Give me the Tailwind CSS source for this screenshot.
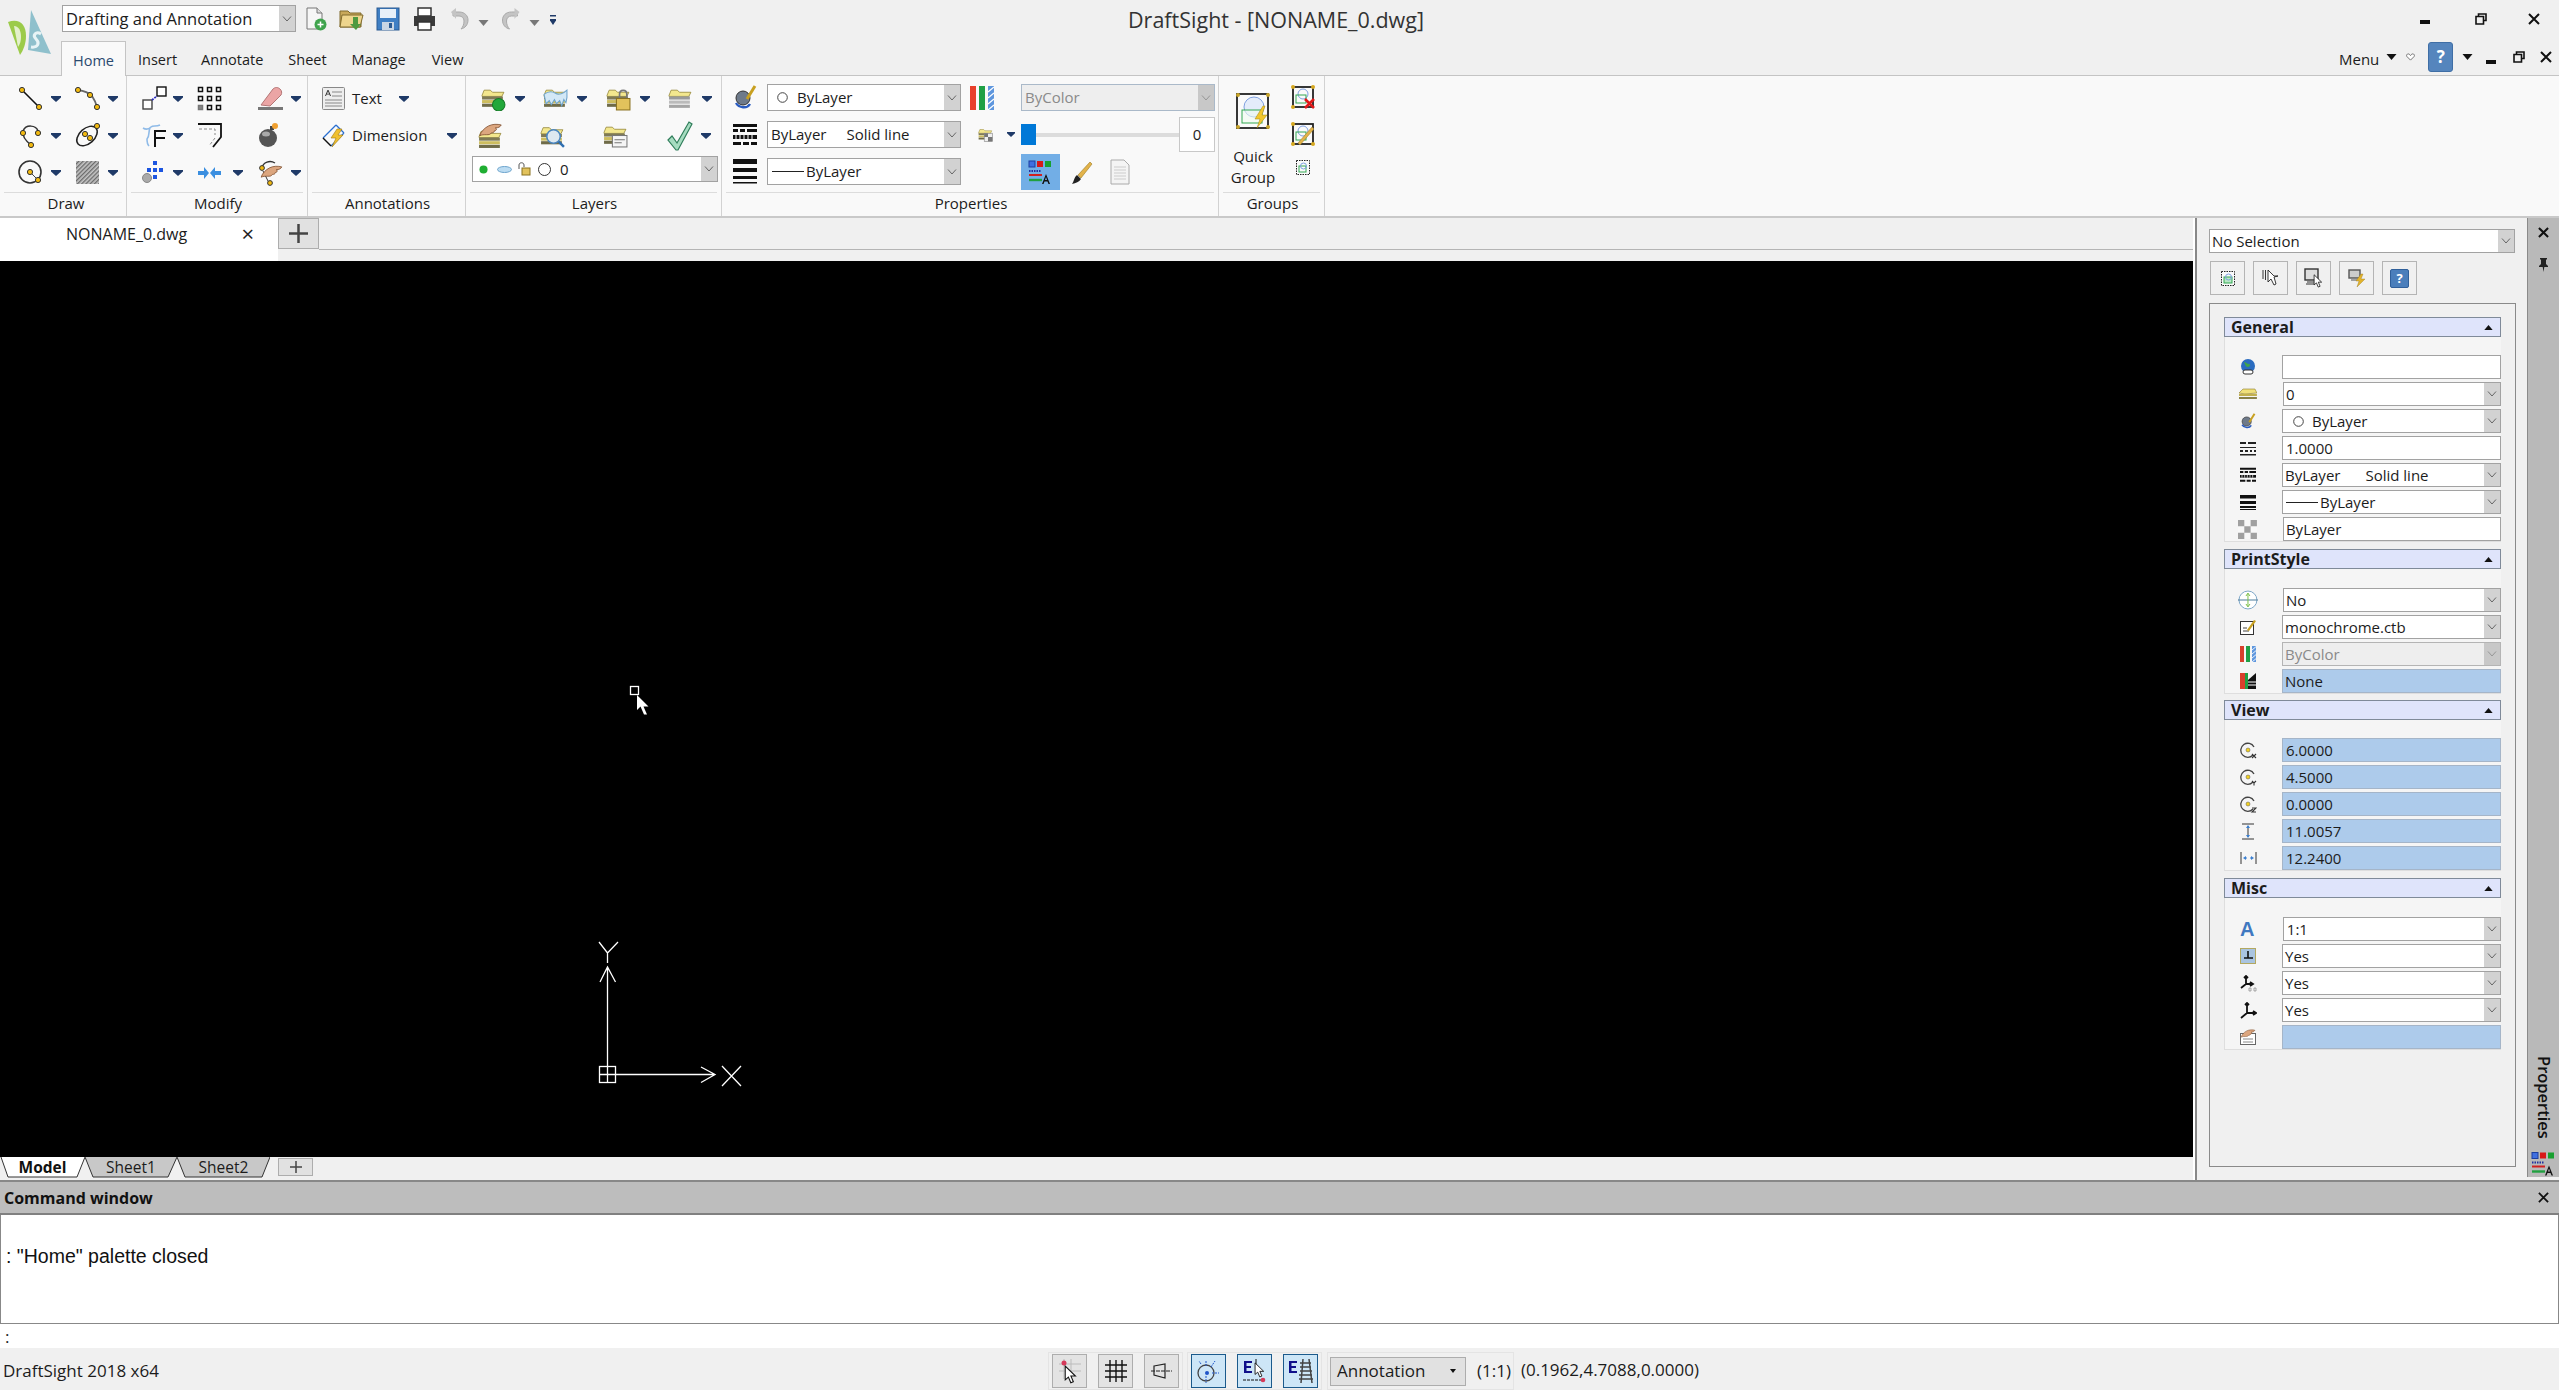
<!DOCTYPE html>
<html lang="en">
<head>
<meta charset="UTF-8">
<title>DraftSight - [NONAME_0.dwg]</title>
<script src="https://cdn.jsdelivr.net/npm/@tailwindcss/browser@4"></script>
</head>
<body class="bg-[#f0f0f0] overflow-hidden">

<!-- shared icon parts -->
<svg class="absolute w-0 h-0">
  <defs>
    <pattern id="hatch" width="3" height="3" patternUnits="userSpaceOnUse" patternTransform="rotate(45)">
      <rect width="3" height="3" fill="#c4c4c4"/><rect width="1.3" height="3" fill="#6a6a6a"/>
    </pattern>
    <symbol id="chev" viewBox="0 0 12 12"><path d="M2 3.500l4 4.500 4-4.500" fill="none" stroke="#666" stroke-width="1"/></symbol>
    <symbol id="drop" viewBox="0 0 10 6"><path d="M0 0h10v1.500L5 6 0 1.500z" fill="#1f3a68"/></symbol>
    <symbol id="stack" viewBox="0 0 24 24">
      <path d="M1 9l2-5h6l2 2h11l-2 4H1z" fill="#f3e78e" stroke="#8a7a28" stroke-width=".7"/>
      <rect x="1" y="10" width="20" height="3" fill="#7f7a55"/>
      <rect x="1" y="13.500" width="20" height="3" fill="#cdbd5e"/>
      <rect x="1" y="17" width="20" height="3" fill="#6f6b48"/>
    </symbol>
    <symbol id="arrow" viewBox="0 0 12 18"><path d="M1 1v13l3-2.600 2.300 5.400 2.400-1-2.300-5.300h4.300z" fill="#fff" stroke="#111" stroke-width="1"/></symbol>
    <symbol id="hand" viewBox="0 0 24 16"><path d="M1 13C2 9 6 5 10 3c4-2 9-2 13-1-1 2-3 3-6 3 2 1 1 3-1 3 0 2-2 2-3 2-1 2-3 2-5 2-3 0-5 0-7 1z" fill="#dca67f" stroke="#7a4a2a" stroke-width=".8"/></symbol>
  </defs>
</svg>

<div class="flex flex-col w-[2559px] h-[1390px] text-[15px] text-[#1c1c1c] font-['Open_Sans','Noto_Sans',sans-serif]">

  <!-- title bar + ribbon tabs -->
  <header class="h-[76px] shrink-0 border-b border-[#c4c4c4] bg-[#f0f0f0] flex">
    <svg class="w-[44px] h-[46px] ml-[7px] mt-[10px] shrink-0" viewBox="0 0 44 46">
      <path d="M24 0L44 44 21 40z" fill="#8fc0cc"/>
      <path d="M1 12C12 8 19 14 19 26c0 8-3 15-6 19z" fill="#9ccb4a"/>
      <path d="M7 16c5 0 7 5 7 11 0 4-1 7-3 10z" fill="#e4f0cc"/>
      <path d="M34 24c-5-3-9 1-5 5s2 9-5 8" fill="none" stroke="#e8f4f6" stroke-width="3"/>
    </svg>
    <div class="w-[540px] shrink-0 ml-[11px] flex flex-col">
      <div class="flex items-start h-[36px] pt-[5px]">
        <div class="flex w-[234px] h-[27px] border border-[#a2a2a2] bg-white">
          <span class="flex-1 pl-[3px] leading-[25px] text-[16.5px]">Drafting and Annotation</span>
          <span class="w-[16px] bg-[#d2d2d2] flex items-center justify-center"><svg class="w-[12px] h-[12px]"><use href="#chev"/></svg></span>
        </div>
        <!-- new -->
        <svg class="w-[22px] h-[24px] ml-[9px] mt-[2px]" viewBox="0 0 22 24"><path d="M2 1h10l5 5v16H2z" fill="#f6f6f6" stroke="#777"/><path d="M12 1v5h5" fill="#ddd" stroke="#777"/><circle cx="15.500" cy="17.500" r="6" fill="#3fa34d"/><path d="M12.500 17.500h6M15.500 14.500v6" stroke="#fff" stroke-width="1.500"/></svg>
        <!-- open -->
        <svg class="w-[25px] h-[24px] ml-[12px] mt-[2px]" viewBox="0 0 25 24"><path d="M1 4h8l2 2h11v14H1z" fill="#c8a85a" stroke="#806a2c"/><path d="M3 8h21l-3 12H1z" fill="#eed58d" stroke="#806a2c"/><path d="M14 10h5v7h3l-5 6-6-6h3z" fill="#4f9a3f"/></svg>
        <!-- save -->
        <svg class="w-[24px] h-[24px] ml-[12px] mt-[2px]" viewBox="0 0 24 24"><rect x="1" y="1" width="22" height="22" fill="#3f7fc4" stroke="#2a5a92"/><rect x="4" y="2" width="16" height="9" fill="#e8f0f8"/><rect x="6" y="15" width="12" height="8" fill="#c9d6e4"/><rect x="13" y="16" width="3" height="5" fill="#2a5a92"/></svg>
        <!-- print -->
        <svg class="w-[25px] h-[24px] ml-[12px] mt-[2px]" viewBox="0 0 25 24"><rect x="6" y="1" width="13" height="8" fill="#fff" stroke="#333" stroke-width="1.500"/><path d="M2 9h21v10H2z" fill="#3a3a3a"/><rect x="6" y="15" width="13" height="8" fill="#fff" stroke="#333" stroke-width="1.500"/></svg>
        <!-- undo / redo -->
        <svg class="w-[20px] h-[24px] ml-[13px] mt-[2px]" viewBox="0 0 20 24"><path d="M3 5h6c6 0 9 4 9 8 0 5-3 8-7 9 2-2 3-5 3-8 0-3-2-5-5-5H3z" fill="#c4c4c4" stroke="#aaa"/><path d="M1 5l5-4v11z" fill="#c4c4c4"/></svg>
        <svg class="w-[11px] h-[6px] ml-[8px] mt-[15px]" viewBox="0 0 10 6"><path d="M0 0h10L5 6z" fill="#777"/></svg>
        <svg class="w-[21px] h-[24px] ml-[11px] mt-[2px]" viewBox="0 0 20 24"><path d="M17 5h-6C5 5 2 9 2 13c0 5 3 8 7 9-2-2-3-5-3-8 0-3 2-5 5-5h6z" fill="#c4c4c4" stroke="#aaa"/><path d="M19 5l-5-4v11z" fill="#c4c4c4"/></svg>
        <svg class="w-[11px] h-[6px] ml-[8px] mt-[15px]" viewBox="0 0 10 6"><path d="M0 0h10L5 6z" fill="#777"/></svg>
        <svg class="w-[6px] h-[11px] ml-[10px] mt-[10px]" viewBox="0 0 6 11"><rect width="6" height="1.500" fill="#1f3a68"/><path d="M0 4h6v1.500L3 10 0 5.500z" fill="#1f3a68"/></svg>
      </div>
      <nav class="flex items-end h-[39px] -ml-[1px] text-[14.5px]">
        <span class="w-[65px] h-[35px] bg-[#f9f9f9] border border-b-0 border-[#c4c4c4] text-center leading-[37px] text-[#2b4a6f] -mb-px relative">Home</span>
        <span class="pl-[12px] leading-[31px]">Insert</span>
        <span class="pl-[24px] leading-[31px]">Annotate</span>
        <span class="pl-[25px] leading-[31px]">Sheet</span>
        <span class="pl-[25px] leading-[31px]">Manage</span>
        <span class="pl-[26px] leading-[31px]">View</span>
      </nav>
    </div>
    <div class="flex-1 text-center pt-[3px] pr-[389px] text-[21.500px] leading-[34px] text-[#333]">DraftSight - [NONAME_0.dwg]</div>
    <div class="w-[220px] shrink-0 flex flex-col">
      <div class="flex items-center h-[38px]">
        <svg class="w-[10px] h-[4px] ml-[81px] mt-[6px]" viewBox="0 0 10 4"><rect width="10" height="4" fill="#111"/></svg>
        <svg class="w-[12px] h-[12px] ml-[45px]" viewBox="0 0 12 12"><path d="M3.500 3V1h7.500v6.500H8.500M1 3.500h7.500V11H1z" fill="none" stroke="#111" stroke-width="1.600"/></svg>
        <svg class="w-[12px] h-[12px] ml-[41px]" viewBox="0 0 12 12"><path d="M1 1l10 10M11 1L1 11" stroke="#111" stroke-width="2"/></svg>
      </div>
      <div class="flex items-center h-[37px]">
        <span class="text-[15px] leading-[30px] mt-[4px]">Menu</span>
        <svg class="w-[11px] h-[6px] ml-[7px]" viewBox="0 0 10 6"><path d="M0 0h10L5 6z" fill="#111"/></svg>
        <svg class="w-[9px] h-[8px] ml-[9px]" viewBox="0 0 10 9"><path d="M5 8L1 4c-1-1.500 0-3 1.500-3S5 3 5 3s1-2 2.500-2S10 2.500 9 4z" fill="#fff" stroke="#666"/></svg>
        <span class="w-[25px] h-[30px] ml-[13px] rounded-[3px] border border-[#3f6ea5] bg-[#5585bd] flex items-center justify-center text-white font-bold text-[17px]">?</span>
        <svg class="w-[11px] h-[6px] ml-[9px]" viewBox="0 0 10 6"><path d="M0 0h10L5 6z" fill="#111"/></svg>
        <svg class="w-[10px] h-[4px] ml-[13px] mt-[10px]" viewBox="0 0 10 4"><rect width="10" height="4" fill="#111"/></svg>
        <svg class="w-[12px] h-[12px] ml-[17px]" viewBox="0 0 12 12"><path d="M3.500 3V1h7.500v6.500H8.500M1 3.500h7.500V11H1z" fill="none" stroke="#111" stroke-width="1.600"/></svg>
        <svg class="w-[12px] h-[12px] ml-[15px]" viewBox="0 0 12 12"><path d="M1 1l10 10M11 1L1 11" stroke="#111" stroke-width="2"/></svg>
      </div>
    </div>
  </header>

  <!-- ribbon -->
  <section class="h-[142px] shrink-0 flex bg-[#f9f9f9] border-b-2 border-[#c9c9c9]">

    <!-- Draw -->
    <div class="w-[127px] shrink-0 flex flex-col border-r border-[#d2d2d2]">
      <div class="h-[116px] pt-[4px] pl-[18px] grid grid-cols-[57px_57px] grid-rows-[37px_37px_37px] items-center">
        <div class="flex items-center"><svg class="w-[25px] h-[25px]" viewBox="0 0 25 25"><path d="M4 4l17 17" stroke="#111" stroke-width="1.600"/><circle cx="4" cy="4" r="2.600" fill="#f2b90f" stroke="#333"/><circle cx="21" cy="21" r="2.600" fill="#f2b90f" stroke="#333"/></svg><svg class="w-[10px] h-[6px] ml-[8px]"><use href="#drop"/></svg></div>
        <div class="flex items-center"><svg class="w-[25px] h-[25px]" viewBox="0 0 25 25"><path d="M3 4c7 1 11 3 14 6 2 3 4 7 5 11" fill="none" stroke="#666" stroke-width="1.800"/><circle cx="3" cy="4" r="2.600" fill="#f2b90f" stroke="#333"/><circle cx="15" cy="9" r="2.600" fill="#f2b90f" stroke="#333"/><circle cx="22" cy="21" r="2.600" fill="#f2b90f" stroke="#333"/></svg><svg class="w-[10px] h-[6px] ml-[8px]"><use href="#drop"/></svg></div>
        <div class="flex items-center"><svg class="w-[25px] h-[25px]" viewBox="0 0 25 25"><path d="M20 8C18 2 8 1 5 8c-1 5 3 10 8 14" fill="none" stroke="#333" stroke-width="1.500"/><circle cx="5" cy="10" r="2.600" fill="#f2b90f" stroke="#333"/><circle cx="20" cy="10" r="2.600" fill="#f2b90f" stroke="#333"/><circle cx="13" cy="22" r="2.600" fill="#f2b90f" stroke="#333"/></svg><svg class="w-[10px] h-[6px] ml-[8px]"><use href="#drop"/></svg></div>
        <div class="flex items-center"><svg class="w-[25px] h-[25px]" viewBox="0 0 25 25"><ellipse cx="12" cy="13" rx="12" ry="7.500" transform="rotate(-42 12 13)" fill="none" stroke="#222" stroke-width="1.500"/><circle cx="10" cy="11" r="2.600" fill="#f2b90f" stroke="#333"/><circle cx="22" cy="3" r="2.600" fill="#f2b90f" stroke="#333"/><circle cx="15" cy="15" r="2.600" fill="#f2b90f" stroke="#333"/></svg><svg class="w-[10px] h-[6px] ml-[8px]"><use href="#drop"/></svg></div>
        <div class="flex items-center"><svg class="w-[25px] h-[25px]" viewBox="0 0 25 25"><circle cx="12" cy="12" r="11" fill="none" stroke="#333" stroke-width="1.600"/><path d="M12 12l8 8" stroke="#444"/><circle cx="12" cy="12" r="2.600" fill="#f2b90f" stroke="#333"/><circle cx="20" cy="20" r="2.600" fill="#f2b90f" stroke="#333"/></svg><svg class="w-[10px] h-[6px] ml-[8px]"><use href="#drop"/></svg></div>
        <div class="flex items-center"><svg class="w-[25px] h-[25px]" viewBox="0 0 25 25"><rect x="1" y="1" width="23" height="23" fill="url(#hatch)"/></svg><svg class="w-[10px] h-[6px] ml-[8px]"><use href="#drop"/></svg></div>
      </div>
      <div class="mx-[4px] pl-[6px] border-t border-[#dcdcdc] text-center leading-[20px]">Draw</div>
    </div>

    <!-- Modify -->
    <div class="w-[181px] shrink-0 flex flex-col border-r border-[#d2d2d2]">
      <div class="h-[116px] pt-[4px] pl-[15px] grid grid-cols-[55px_61px_50px] grid-rows-[37px_37px_37px] items-center">
        <div class="flex items-center"><svg class="w-[25px] h-[25px]" viewBox="0 0 25 25"><rect x="1" y="14" width="9" height="9" fill="#fff" stroke="#444" stroke-width="1.400"/><rect x="15" y="1" width="9" height="9" fill="#fff" stroke="#111" stroke-width="1.400"/><path d="M10 14l5-4" stroke="#2a2ac0" stroke-width="1.800" stroke-dasharray="2 1"/></svg><svg class="w-[10px] h-[6px] ml-[6px]"><use href="#drop"/></svg></div>
        <svg class="w-[25px] h-[25px]" viewBox="0 0 25 25"><g fill="#fff" stroke="#111" stroke-width="1.500"><rect x="1.500" y="1.500" width="4" height="4"/><rect x="10.500" y="1.500" width="4" height="4"/><rect x="19.500" y="1.500" width="4" height="4"/><rect x="1.500" y="10.500" width="4" height="4"/><rect x="10.500" y="10.500" width="4" height="4"/><rect x="19.500" y="10.500" width="4" height="4"/><rect x="1.500" y="19.500" width="4" height="4" fill="#888" stroke="#777"/><rect x="10.500" y="19.500" width="4" height="4"/><rect x="19.500" y="19.500" width="4" height="4"/></g></svg>
        <div class="flex items-center"><svg class="w-[25px] h-[25px]" viewBox="0 0 25 25"><path d="M3 19L15 3c2-2 5-2 7 0s2 4 1 6L12 20z" fill="#eba5a5" stroke="#b37575"/><rect x="0" y="21" width="25" height="3" fill="#777"/></svg><svg class="w-[10px] h-[6px] ml-[8px]"><use href="#drop"/></svg></div>
        <div class="flex items-center"><svg class="w-[25px] h-[25px]" viewBox="0 0 25 25"><path d="M1 5c3 2 6 1 8-1s5 0 9-2M8 5c-2 4 0 8-3 11 0 2 0 5 2 7" fill="none" stroke="#8fbbe8" stroke-width="1.600"/><path d="M12 7h12v2H14v5h9v2h-9v8h-2z" fill="#111"/></svg><svg class="w-[10px] h-[6px] ml-[6px]"><use href="#drop"/></svg></div>
        <svg class="w-[25px] h-[25px]" viewBox="0 0 25 25"><path d="M1 1h23v13l-8 10" fill="none" stroke="#111" stroke-width="1.800"/><path d="M2 6h16v6M18 15l-6 8" fill="none" stroke="#888" stroke-dasharray="3 2"/></svg>
        <svg class="w-[22px] h-[25px]" viewBox="0 0 22 25"><circle cx="10" cy="15" r="9" fill="#555"/><ellipse cx="8" cy="11" rx="4" ry="2.500" fill="#aaa"/><rect x="12" y="3" width="4" height="4" fill="#444"/><circle cx="17" cy="3" r="3" fill="#f0a030"/></svg>
        <div class="flex items-center"><svg class="w-[25px] h-[25px]" viewBox="0 0 25 25"><g fill="#1c55e0"><rect x="11" y="1" width="4" height="4"/><rect x="5" y="8" width="4" height="4"/><rect x="11" y="8" width="4" height="4"/><rect x="17" y="8" width="4" height="4"/><rect x="11" y="15" width="4" height="4"/></g><circle cx="5" cy="18" r="4.500" fill="#aaa" stroke="#888"/></svg><svg class="w-[10px] h-[6px] ml-[6px]"><use href="#drop"/></svg></div>
        <div class="flex items-center"><svg class="w-[25px] h-[14px]" viewBox="0 0 25 14"><path d="M1 5h6V1l5 6-5 6V9H1zM24 5h-6V1l-5 6 5 6V9h6z" fill="#3b8fe0"/></svg><svg class="w-[10px] h-[6px] ml-[11px]"><use href="#drop"/></svg></div>
        <div class="flex items-center"><svg class="w-[25px] h-[27px]" viewBox="0 0 25 27"><path d="M4 9C5 3 12 1 17 4" fill="none" stroke="#333" stroke-width="1.400"/><path d="M5 12l6 12" stroke="#333"/><use href="#hand" x="2" y="6" width="23" height="15"/><circle cx="4" cy="9" r="2.400" fill="#f2b90f" stroke="#333"/><circle cx="12" cy="24" r="2.400" fill="#f2b90f" stroke="#333"/></svg><svg class="w-[10px] h-[6px] ml-[8px]"><use href="#drop"/></svg></div>
      </div>
      <div class="mx-[4px] pl-[2px] border-t border-[#dcdcdc] text-center leading-[20px]">Modify</div>
    </div>

    <!-- Annotations -->
    <div class="w-[158px] shrink-0 flex flex-col border-r border-[#d2d2d2]">
      <div class="h-[116px] pt-[4px] pl-[14px] flex flex-col">
        <div class="h-[37px] flex items-center"><svg class="w-[23px] h-[23px]" viewBox="0 0 23 23"><rect x=".5" y=".5" width="22" height="22" rx="1" fill="#eee" stroke="#888"/><path d="M5.500 3l-2.500 6h1l.6-1.500h2.800L8 9h1L6.500 3zM5 6.700l1-2.500 1 2.500z" fill="#333"/><path d="M10 5h10M10 9h10M3 13h17M3 16h17M3 19h17" stroke="#888"/></svg><span class="ml-[7px] w-[47px]">Text</span><svg class="w-[10px] h-[6px]"><use href="#drop"/></svg></div>
        <div class="h-[37px] flex items-center"><svg class="w-[24px] h-[25px]" viewBox="0 0 24 25"><path d="M1 15L14 2M9 23l13-13M14 2l8 8" fill="none" stroke="#2a6fd0" stroke-width="1.300"/><path d="M1 15l8 8" fill="none" stroke="#111" stroke-width="1.500"/><path d="M15 6l-6 9h5l-4 9 11-12h-5l4-6z" fill="#f0c030" stroke="#a07810" stroke-width=".6"/></svg><span class="ml-[6px] w-[95px]">Dimension</span><svg class="w-[10px] h-[6px]"><use href="#drop"/></svg></div>
      </div>
      <div class="mx-[4px] pl-[2px] border-t border-[#dcdcdc] text-center leading-[20px]">Annotations</div>
    </div>

    <!-- Layers -->
    <div class="w-[256px] shrink-0 flex flex-col border-r border-[#d2d2d2]">
      <div class="h-[116px] pt-[4px] flex flex-col">
        <div class="h-[37px] pl-[15px] grid grid-cols-[62px_63px_62px_60px] items-center">
          <div class="flex items-center"><svg class="w-[25px] h-[25px]" viewBox="0 0 24 24"><use href="#stack"/><circle cx="17" cy="18" r="6" fill="#22a83a" stroke="#157a26"/></svg><svg class="w-[10px] h-[6px] ml-[9px]"><use href="#drop"/></svg></div>
          <div class="flex items-center"><svg class="w-[25px] h-[25px]" viewBox="0 0 24 24"><use href="#stack"/><path d="M1 8c4-3 8-3 11-1s8 0 11-3v7l-1 5-2-3-2 6-2-5-3 3-2-4-3 5-2-4-3 3z" fill="#d3e8f6" stroke="#6da4cc"/></svg><svg class="w-[10px] h-[6px] ml-[9px]"><use href="#drop"/></svg></div>
          <div class="flex items-center"><svg class="w-[25px] h-[25px]" viewBox="0 0 24 24"><use href="#stack"/><path d="M13 12V8c0-5 7-5 7 0v4" fill="none" stroke="#777" stroke-width="1.600"/><rect x="10" y="12" width="13" height="11" fill="#e2c25c" stroke="#8a7220"/></svg><svg class="w-[10px] h-[6px] ml-[9px]"><use href="#drop"/></svg></div>
          <div class="flex items-center"><svg class="w-[25px] h-[25px]" viewBox="0 0 24 24"><path d="M1 9l2-5h6l2 2h11l-2 4H1z" fill="#f3e78e" stroke="#8a7a28" stroke-width=".7"/><rect x="1" y="10" width="20" height="3" fill="#9a9a9a"/><rect x="1" y="14" width="20" height="3" fill="#bbb"/><rect x="1" y="18" width="20" height="3" fill="#a5a5a5"/></svg><svg class="w-[10px] h-[6px] ml-[9px]"><use href="#drop"/></svg></div>
        </div>
        <div class="h-[37px] pl-[12px] grid grid-cols-[62px_63px_64px_62px] items-center">
          <svg class="w-[25px] h-[26px]" viewBox="0 0 24 25"><use href="#stack" y="4" width="24" height="24"/><use href="#hand" y="0" width="24" height="15"/></svg>
          <svg class="w-[25px] h-[26px]" viewBox="0 0 24 25"><use href="#stack"/><circle cx="13" cy="13" r="6.500" fill="#dde8f0" stroke="#4a86c0" stroke-width="1.500"/><path d="M18 18l5 5" stroke="#2f6fb0" stroke-width="2.400"/></svg>
          <svg class="w-[25px] h-[25px]" viewBox="0 0 24 24"><use href="#stack"/><rect x="9" y="12" width="14" height="11" fill="#f5f5f5" stroke="#777"/><path d="M11 16h10M11 19h7" stroke="#777"/></svg>
          <div class="flex items-center"><svg class="w-[26px] h-[30px]" viewBox="0 0 26 30"><path d="M1 19l4-4 5 7L22 1l3 2L11 29h-2z" fill="#a6dcc0" stroke="#2f7d5a" stroke-width="1.200"/></svg><svg class="w-[10px] h-[6px] ml-[8px]"><use href="#drop"/></svg></div>
        </div>
        <div class="pl-[6px] pt-[2px]">
          <div class="flex w-[246px] h-[26px] border border-[#a2a2a2] bg-white">
            <span class="flex-1 flex items-center pl-[6px]">
              <svg class="w-[9px] h-[9px]" viewBox="0 0 10 10"><circle cx="5" cy="5" r="4.500" fill="#1fae32"/></svg>
              <svg class="w-[15px] h-[7px] ml-[9px]" viewBox="0 0 15 7"><ellipse cx="7.500" cy="3.500" rx="7" ry="3" fill="#bcdcf2" stroke="#6da4cc"/></svg>
              <svg class="w-[13px] h-[14px] ml-[6px]" viewBox="0 0 13 14"><path d="M1 7V3c0-3 5-3 5 0v2" fill="none" stroke="#555"/><rect x="4" y="6" width="8" height="7" fill="#e2c25c" stroke="#8a7220"/></svg>
              <svg class="w-[13px] h-[13px] ml-[7px]" viewBox="0 0 13 13"><circle cx="6.500" cy="6.500" r="6" fill="#fff" stroke="#333"/></svg>
              <span class="ml-[9px] leading-[24px]">0</span>
            </span>
            <span class="w-[16px] bg-[#d2d2d2] flex items-center justify-center"><svg class="w-[12px] h-[12px]"><use href="#chev"/></svg></span>
          </div>
        </div>
      </div>
      <div class="mx-[4px] pl-[2px] border-t border-[#dcdcdc] text-center leading-[20px]">Layers</div>
    </div>

    <!-- Properties -->
    <div class="w-[497px] shrink-0 flex flex-col border-r border-[#d2d2d2]">
      <div class="h-[116px] flex">
        <div class="w-[245px] shrink-0 pt-[8px] pl-[11px] flex flex-col gap-[10px]">
          <div class="flex items-center h-[27px]">
            <svg class="w-[24px] h-[26px]" viewBox="0 0 24 26"><circle cx="10" cy="13" r="7" fill="#6e7a8a" stroke="#333"/><path d="M3 18c3 5 11 6 14 1" fill="none" stroke="#2a5cc0" stroke-width="2.400"/><path d="M14 14L22 1" stroke="#c8a020" stroke-width="3"/></svg>
            <div class="flex w-[194px] h-[27px] ml-[10px] border border-[#a2a2a2] bg-white">
              <span class="flex-1 flex items-center pl-[9px]"><svg class="w-[11px] h-[11px]" viewBox="0 0 11 11"><circle cx="5.500" cy="5.500" r="4.800" fill="#fff" stroke="#444"/></svg><span class="ml-[9px] leading-[25px]">ByLayer</span></span>
              <span class="w-[16px] bg-[#d2d2d2] flex items-center justify-center"><svg class="w-[12px] h-[12px]"><use href="#chev"/></svg></span>
            </div>
          </div>
          <div class="flex items-center h-[27px]">
            <svg class="w-[24px] h-[24px]" viewBox="0 0 24 24"><path d="M0 1h24v3H0zM0 6h5v3H0zM7 6h5v3H7zM14 6h10v3H14z" fill="#111"/><path d="M0 12h24v4H0z" fill="#111"/><path d="M3 12v4M7 12v4M11 12v4M15 12v4M19 12v4" stroke="#fff"/><path d="M0 19h8v3H0zM10 19h6v3h-6zM18 19h6v3h-6z" fill="#111"/></svg>
            <div class="flex w-[194px] h-[27px] ml-[10px] border border-[#a2a2a2] bg-white">
              <span class="flex-1 pl-[3px] leading-[25px]">ByLayer<span class="ml-[20px]">Solid line</span></span>
              <span class="w-[16px] bg-[#d2d2d2] flex items-center justify-center"><svg class="w-[12px] h-[12px]"><use href="#chev"/></svg></span>
            </div>
          </div>
          <div class="flex items-center h-[27px]">
            <svg class="w-[24px] h-[25px]" viewBox="0 0 24 25"><rect width="24" height="5" fill="#111"/><rect y="9" width="24" height="4" fill="#111"/><rect y="17" width="24" height="3" fill="#111"/><rect y="23" width="24" height="1.500" fill="#111"/></svg>
            <div class="flex w-[194px] h-[27px] ml-[10px] border border-[#a2a2a2] bg-white">
              <span class="flex-1 flex items-center pl-[4px]"><span class="w-[32px] border-t border-[#222]"></span><span class="leading-[25px] ml-[2px]">ByLayer</span></span>
              <span class="w-[16px] bg-[#d2d2d2] flex items-center justify-center"><svg class="w-[12px] h-[12px]"><use href="#chev"/></svg></span>
            </div>
          </div>
        </div>
        <div class="w-[54px] shrink-0 pt-[10px] flex flex-col">
          <svg class="w-[24px] h-[24px] ml-[3px]" viewBox="0 0 24 24"><rect width="6" height="24" fill="#e8412c"/><rect x="9" width="6" height="24" fill="#1fa045"/><rect x="18" width="6" height="24" fill="#5f97de"/><path d="M18 6l6-5M18 12l6-5M18 18l6-5M18 24l6-5" stroke="#fff" stroke-width="1.300"/></svg>
          <div class="flex items-center mt-[16px] ml-[11px]">
            <svg class="w-[15px] h-[17px]" viewBox="0 0 24 24"><use href="#stack"/><rect x="10" y="10" width="13" height="13" fill="#eee" stroke="#888"/><rect x="10" y="10" width="6" height="6" fill="#777"/><rect x="16" y="16" width="7" height="7" fill="#777"/></svg>
            <svg class="w-[8px] h-[5px] ml-[14px]"><use href="#drop"/></svg>
          </div>
        </div>
        <div class="w-[194px] shrink-0 pt-[8px] flex flex-col">
          <div class="flex w-[194px] h-[27px] border border-[#aab9c9] bg-[#eeeeee]">
            <span class="flex-1 pl-[3px] leading-[25px] text-[#8a8a8a]">ByColor</span>
            <span class="w-[16px] bg-[#c8c8c8] flex items-center justify-center"><svg class="w-[12px] h-[12px] opacity-50"><use href="#chev"/></svg></span>
          </div>
          <div class="flex items-center mt-[6px] h-[35px]">
            <span class="w-[15px] h-[21px] bg-[#0078d7]"></span>
            <span class="w-[143px] h-[4px] bg-[#dcdcdc]"></span>
            <span class="w-[36px] h-[35px] border border-[#c8c8c8] bg-white text-center leading-[33px]">0</span>
          </div>
          <div class="flex items-center mt-[2px]">
            <span class="w-[39px] h-[36px] bg-[#72aee6] flex items-center justify-center">
              <svg class="w-[25px] h-[25px]" viewBox="0 0 25 25"><rect x="1" y="1" width="6" height="6" fill="#3f6fe0" stroke="#1c3fa0"/><rect x="9" y="1" width="6" height="6" fill="#d81818"/><rect x="17" y="1" width="6" height="6" fill="#18a030"/><path d="M1 11h12" stroke="#2030a0" stroke-width="2" stroke-dasharray="1.500 1"/><path d="M1 15h13" stroke="#d02020" stroke-width="2"/><path d="M1 20h13" stroke="#20a040" stroke-width="2.400"/><path d="M18 14l-4 10h1.500l1-2.600h3l1 2.600H22zM17 20l1-3 1 3z" fill="#111"/></svg>
            </span>
            <svg class="w-[23px] h-[25px] ml-[10px]" viewBox="0 0 23 25"><path d="M8 15L20 2l2 2L11 18z" fill="#e3b34a" stroke="#9a7a20" stroke-width=".6"/><path d="M7 15l4 4c-2 3-5 4-9 5 2-2 2-7 5-9z" fill="#222"/></svg>
            <svg class="w-[20px] h-[26px] ml-[17px]" viewBox="0 0 20 26"><path d="M1 1h13l5 5v19H1z" fill="#f4f4f4" stroke="#aaa"/><path d="M4 8h12M4 11h12M4 14h12M4 17h12M4 20h12" stroke="#ccc"/></svg>
          </div>
        </div>
      </div>
      <div class="mx-[4px] pl-[2px] border-t border-[#dcdcdc] text-center leading-[20px]">Properties</div>
    </div>

    <!-- Groups -->
    <div class="w-[106px] shrink-0 flex flex-col border-r border-[#d2d2d2]">
      <div class="h-[116px] flex">
        <div class="w-[68px] shrink-0 pt-[16px] flex flex-col items-center">
          <svg class="w-[36px] h-[38px]" viewBox="0 0 36 38"><rect x="2" y="2" width="31" height="34" fill="#fafafa" stroke="#222" stroke-width="1.800"/><circle cx="19" cy="15" r="10" fill="#e4ecfa" stroke="#7ea0e0"/><rect x="7" y="18" width="20" height="13" fill="#f0fbf0" fill-opacity=".6" stroke="#33a852"/><path d="M28 14l-8 13h5l-3 9 10-13h-5l3-9z" fill="#f2c72e" stroke="#a38410" stroke-width=".5"/><circle cx="3" cy="3" r="2" fill="#c9a52a"/><circle cx="33" cy="3" r="2" fill="#c9a52a"/><circle cx="3" cy="35" r="2" fill="#c9a52a"/><circle cx="33" cy="35" r="2" fill="#c9a52a"/></svg>
          <span class="mt-[16px] leading-[21px] text-center">Quick<br>Group</span>
        </div>
        <div class="w-[38px] shrink-0 pt-[9px] pl-[4px] flex flex-col">
          <svg class="w-[24px] h-[24px]" viewBox="0 0 24 24"><rect x="2" y="2" width="20" height="20" fill="#fafafa" stroke="#222" stroke-width="1.800"/><circle cx="12" cy="9" r="5" fill="none" stroke="#7ea0e0"/><rect x="5" y="10" width="10" height="8" fill="none" stroke="#33a852"/><path d="M14 14l9 9M23 14l-9 9" stroke="#e01818" stroke-width="2.600"/><circle cx="2" cy="2" r="2" fill="#d6a820"/><circle cx="22" cy="2" r="2" fill="#d6a820"/><circle cx="2" cy="22" r="2" fill="#d6a820"/></svg>
          <svg class="w-[24px] h-[24px] mt-[13px]" viewBox="0 0 24 24"><rect x="2" y="2" width="20" height="20" fill="#fafafa" stroke="#222" stroke-width="1.800"/><circle cx="12" cy="9" r="5" fill="none" stroke="#7ea0e0"/><rect x="5" y="10" width="10" height="8" fill="none" stroke="#33a852"/><path d="M7 21L21 5l2 2L9 23z" fill="#e3b34a" stroke="#9a7a20" stroke-width=".5"/><circle cx="2" cy="2" r="2" fill="#d6a820"/><circle cx="22" cy="22" r="2" fill="#d6a820"/><circle cx="2" cy="22" r="2" fill="#d6a820"/></svg>
          <svg class="w-[14px] h-[15px] mt-[14px] ml-[5px]" viewBox="0 0 14 15"><rect x=".5" y=".5" width="13" height="14" fill="#fafafa" stroke="#222" stroke-dasharray="1.500 1"/><rect x="3" y="6" width="7" height="6" fill="none" stroke="#33a852"/><circle cx="7.500" cy="6" r="3" fill="none" stroke="#7ea0e0"/></svg>
        </div>
      </div>
      <div class="mx-[4px] pl-[2px] border-t border-[#dcdcdc] text-center leading-[20px]">Groups</div>
    </div>
  </section>

  <!-- drawing area + properties palette -->
  <main class="h-[962px] shrink-0 flex">
    <div class="w-[2193px] shrink-0 flex flex-col">
      <div class="h-[43px] shrink-0 flex items-start">
        <div class="w-[278px] h-[43px] bg-white flex pl-[66px] pr-[24px] justify-between text-[16px] leading-[33px]"><span>NONAME_0.dwg</span><span class="text-[#222] text-[22px] leading-[31px]">×</span></div>
        <div class="w-[41px] h-[31px] bg-[#e1e1e1] border border-[#adadad] flex items-center justify-center">
          <svg class="w-[21px] h-[21px]" viewBox="0 0 21 21"><path d="M10.500 1v19M1 10.500h19" stroke="#444" stroke-width="2.500"/></svg>
        </div>
        <div class="flex-1 h-[32px] bg-[#f0f0f0] border-b border-[#b4b4b4]"></div>
      </div>
      <div class="h-[896px] shrink-0 bg-black relative">
        <svg class="absolute left-0 top-0 w-[800px] h-[896px]" viewBox="0 261 800 896" fill="none" stroke="#fff" stroke-width="1.300">
          <rect x="630.500" y="686.500" width="8" height="8"/>
          <path d="M637 695v15l3.500-3.500 3.500 8h3l-3.500-8h5z" fill="#fff" stroke="none"/>
          <rect x="599.500" y="1066.500" width="16" height="16"/>
          <path d="M607.500 1066.500V967M600 982l7.500-15 8 15M599 942l8.500 11 10.500-11M607.500 953v10"/>
          <path d="M615.500 1074.500H715M701 1067l14 7.500-14 8M599.500 1074.500h16M607.500 1066.500v16"/>
          <path d="M722 1066l19 20M741 1066l-19 20"/>
        </svg>
      </div>
      <div class="h-[23px] shrink-0 flex items-start bg-[#f0f0f0]">
        <div class="relative w-[85px] h-[21px] flex justify-center font-bold text-[15.500px] leading-[21px] text-[#111]">
          <svg class="absolute inset-0 w-[85px] h-[21px]" viewBox="0 0 85 21"><path d="M1 0l7 20h69l8-20" fill="#fff" stroke="#333"/></svg>
          <span class="relative">Model</span>
        </div>
        <div class="relative w-[92px] h-[21px] flex justify-center text-[15.500px] leading-[21px]">
          <svg class="absolute inset-0 w-[92px] h-[21px]" viewBox="0 0 92 21"><path d="M0 0l8 20h75l9-20" fill="#c8c8c8" stroke="#333"/></svg>
          <span class="relative">Sheet1</span>
        </div>
        <div class="relative w-[93px] h-[21px] flex justify-center text-[15.500px] leading-[21px]">
          <svg class="absolute inset-0 w-[93px] h-[21px]" viewBox="0 0 93 21"><path d="M0 0l8 20h77l8-20" fill="#c8c8c8" stroke="#333"/></svg>
          <span class="relative">Sheet2</span>
        </div>
        <div class="w-[35px] h-[18px] mt-[1px] ml-[8px] bg-[#e1e1e1] border border-[#adadad] flex items-center justify-center">
          <svg class="w-[14px] h-[14px]" viewBox="0 0 14 14"><path d="M7 1v12M1 7h12" stroke="#444" stroke-width="1.500"/></svg>
        </div>
      </div>
    </div>

    <div class="w-[2px] shrink-0 bg-white"></div>

    <!-- properties palette -->
    <aside class="flex-1 flex border-l-2 border-[#888]">
      <div class="w-[330px] shrink-0 bg-[#f0f0f0] pl-[12px] pt-[11px]">
        <div class="flex w-[306px] h-[24px] border border-[#a2a2a2] bg-white">
          <span class="flex-1 pl-[2px] leading-[22px]">No Selection</span>
          <span class="w-[16px] bg-[#d2d2d2] flex items-center justify-center"><svg class="w-[12px] h-[12px]"><use href="#chev"/></svg></span>
        </div>
        <div class="flex gap-[8px] mt-[8px] ml-[1px]">
          <span class="w-[35px] h-[34px] border border-[#b4b4b4] flex items-center justify-center"><svg class="w-[14px] h-[15px]" viewBox="0 0 14 15"><rect x=".5" y=".5" width="13" height="14" fill="#fafafa" stroke="#222" stroke-dasharray="1.500 1"/><rect x="3" y="6" width="8" height="6" fill="#b8e8c4" stroke="#33a852"/><circle cx="7.500" cy="6" r="3" fill="none" stroke="#7ea0e0"/></svg></span>
          <span class="w-[35px] h-[34px] border border-[#b4b4b4] flex items-center justify-center"><svg class="w-[17px] h-[18px]" viewBox="0 0 17 18"><path d="M1 1v9M3.500 1v10M6 1l6 6h4l-4 1 2 7-2 1-3-6-3 3z" fill="#fff" stroke="#222" stroke-width=".9"/></svg></span>
          <span class="w-[35px] h-[34px] border border-[#b4b4b4] flex items-center justify-center"><svg class="w-[20px] h-[20px]" viewBox="0 0 20 20"><rect x="1" y="1" width="13" height="11" fill="#ddd" stroke="#333" stroke-width="1.400"/><path d="M3 14h9M2 16h9" stroke="#333"/><use href="#arrow" x="9" y="6" width="10" height="14"/></svg></span>
          <span class="w-[35px] h-[34px] border border-[#b4b4b4] flex items-center justify-center"><svg class="w-[18px] h-[18px]" viewBox="0 0 18 18"><rect x="1" y="1" width="11" height="8" fill="#ccc" stroke="#555" stroke-width="1.400"/><path d="M3 11h8" stroke="#555"/><path d="M13 5l-5 7h3l-2 6 8-8h-4l2-5z" fill="#e3b32a" stroke="#9a7a20" stroke-width=".4"/></svg></span>
          <span class="w-[35px] h-[34px] border border-[#b4b4b4] flex items-center justify-center"><span class="w-[19px] h-[19px] rounded-[2px] bg-[#4a7ebb] border border-[#2f5f9a] text-white font-bold text-[13px] leading-[17px] text-center">?</span></span>
        </div>
        <div class="w-[307px] h-[864px] mt-[8px] border border-[#8a8a8a] pt-[13px] pl-[14px]">

          <!-- General -->
          <div class="w-[277px]">
            <div class="h-[20px] flex items-center justify-between pl-[6px] pr-[6px] bg-[#dfe4fb] border border-[#7f8a99] font-bold text-[16px] leading-[18px]"><span>General</span><svg class="w-[9px] h-[5px] mr-[1px]" viewBox="0 0 10 6"><path d="M0 6h10L5 0z" fill="#111"/></svg></div>
            <div class="bg-[#f5f5f5] border-l border-b border-[#dedede] pt-[18px] flex flex-col gap-[3px]">
              <div class="flex items-center h-[24px]"><svg class="w-[16px] h-[16px] ml-[15px] mr-[26px]" viewBox="0 0 16 16"><circle cx="8" cy="7" r="7" fill="#2a6cc0"/><path d="M4 3c2 0 3 2 5 2s1 3-1 3-3-2-4-5z" fill="#3fa34d"/><rect x="3" y="11" width="10" height="4" rx="2" fill="#fff" stroke="#333"/></svg><div class="w-[219px] h-[24px] border border-[#a2a2a2] bg-white"></div></div>
              <div class="flex items-center h-[24px]"><svg class="w-[18px] h-[12px] ml-[14px] mr-[26px]" viewBox="0 0 18 12"><path d="M4 1h12l2 4-12 1-6-1z" fill="#f0e07a" stroke="#8a7a28" stroke-width=".6"/><path d="M0 6h18v2H0z" fill="#c2b04e"/><path d="M0 9h18v2H0z" fill="#8a8248"/></svg><div class="flex w-[219px] h-[24px] border border-[#a2a2a2] bg-white"><span class="flex-1 pl-[2px] leading-[22px]">0</span><span class="w-[16px] bg-[#d2d2d2] flex items-center justify-center"><svg class="w-[12px] h-[12px]"><use href="#chev"/></svg></span></div></div>
              <div class="flex items-center h-[24px]"><svg class="w-[16px] h-[17px] ml-[15px] mr-[26px]" viewBox="0 0 24 26"><circle cx="10" cy="13" r="7" fill="#6e7a8a" stroke="#333"/><path d="M3 18c3 5 11 6 14 1" fill="none" stroke="#2a5cc0" stroke-width="2.400"/><path d="M14 14L22 1" stroke="#c8a020" stroke-width="3"/></svg><div class="flex w-[219px] h-[24px] border border-[#a2a2a2] bg-white"><span class="flex-1 flex items-center pl-[10px]"><svg class="w-[11px] h-[11px]" viewBox="0 0 11 11"><circle cx="5.500" cy="5.500" r="4.800" fill="#fff" stroke="#444"/></svg><span class="ml-[8px] leading-[22px]">ByLayer</span></span><span class="w-[16px] bg-[#d2d2d2] flex items-center justify-center"><svg class="w-[12px] h-[12px]"><use href="#chev"/></svg></span></div></div>
              <div class="flex items-center h-[24px]"><svg class="w-[16px] h-[15px] ml-[15px] mr-[26px]" viewBox="0 0 16 15"><path d="M0 1h6v2H0zM8 1h8v2H8zM0 6h16v1H0zM0 9h3v2H0zM5 9h3v2H5zM10 9h2v2h-2zM14 9h2v2h-2zM0 13h16v1.500H0z" fill="#222"/></svg><div class="w-[219px] h-[24px] border border-[#a2a2a2] bg-white pl-[3px] leading-[22px]">1.0000</div></div>
              <div class="flex items-center h-[24px]"><svg class="w-[16px] h-[16px] ml-[15px] mr-[26px]" viewBox="0 0 24 24"><path d="M0 1h24v3H0zM0 6h5v3H0zM7 6h5v3H7zM14 6h10v3H14z" fill="#111"/><path d="M0 12h24v4H0z" fill="#111"/><path d="M3 12v4M7 12v4M11 12v4M15 12v4M19 12v4" stroke="#fff"/><path d="M0 19h8v3H0zM10 19h6v3h-6zM18 19h6v3h-6z" fill="#111"/></svg><div class="flex w-[219px] h-[24px] border border-[#a2a2a2] bg-white"><span class="flex-1 pl-[2px] leading-[22px]">ByLayer<span class="ml-[25px]">Solid line</span></span><span class="w-[16px] bg-[#d2d2d2] flex items-center justify-center"><svg class="w-[12px] h-[12px]"><use href="#chev"/></svg></span></div></div>
              <div class="flex items-center h-[24px]"><svg class="w-[16px] h-[15px] ml-[15px] mr-[26px]" viewBox="0 0 16 15"><rect width="16" height="3.500" fill="#111"/><rect y="6" width="16" height="3" fill="#111"/><rect y="11" width="16" height="2" fill="#111"/><rect y="14" width="16" height="1" fill="#111"/></svg><div class="flex w-[219px] h-[24px] border border-[#a2a2a2] bg-white"><span class="flex-1 flex items-center pl-[3px]"><span class="w-[32px] border-t border-[#222]"></span><span class="leading-[22px] ml-[2px]">ByLayer</span></span><span class="w-[16px] bg-[#d2d2d2] flex items-center justify-center"><svg class="w-[12px] h-[12px]"><use href="#chev"/></svg></span></div></div>
              <div class="flex items-center h-[24px]"><svg class="w-[19px] h-[19px] ml-[13px] mr-[26px]" viewBox="0 0 18 18"><rect width="18" height="18" fill="#f8f8f8"/><path d="M0 0h6v6H0zM12 0h6v6h-6zM6 6h6v6H6zM0 12h6v6H0zM12 12h6v6h-6z" fill="#a0a0a0"/></svg><div class="w-[219px] h-[24px] border border-[#a2a2a2] bg-white pl-[2px] leading-[22px]">ByLayer</div></div>
            </div>
          </div>

          <!-- PrintStyle -->
          <div class="w-[277px] mt-[7px]">
            <div class="h-[20px] flex items-center justify-between pl-[6px] pr-[6px] bg-[#dfe4fb] border border-[#7f8a99] font-bold text-[16px] leading-[18px]"><span>PrintStyle</span><svg class="w-[9px] h-[5px] mr-[1px]" viewBox="0 0 10 6"><path d="M0 6h10L5 0z" fill="#111"/></svg></div>
            <div class="bg-[#f5f5f5] border-l border-b border-[#dedede] pt-[19px] flex flex-col gap-[3px]">
              <div class="flex items-center h-[24px]"><svg class="w-[20px] h-[20px] ml-[13px] mr-[25px]" viewBox="0 0 20 20"><circle cx="10" cy="10" r="9" fill="#fff" stroke="#7fa8c8"/><path d="M0 10h20" stroke="#4a7a9a"/><path d="M10 4v12M8 6l2-3 2 3M8 14l2 3 2-3" fill="none" stroke="#7cc04a"/></svg><div class="flex w-[219px] h-[24px] border border-[#a2a2a2] bg-white"><span class="flex-1 pl-[2px] leading-[22px]">No</span><span class="w-[16px] bg-[#d2d2d2] flex items-center justify-center"><svg class="w-[12px] h-[12px]"><use href="#chev"/></svg></span></div></div>
              <div class="flex items-center h-[24px]"><svg class="w-[16px] h-[16px] ml-[15px] mr-[26px]" viewBox="0 0 16 16"><rect x=".5" y="2.500" width="13" height="13" fill="#fff" stroke="#333"/><path d="M3 12h6M3 9h4" stroke="#444"/><path d="M7 11L14 1l2 1-7 10z" fill="#c8a020"/></svg><div class="flex w-[219px] h-[24px] border border-[#a2a2a2] bg-white"><span class="flex-1 pl-[2px] leading-[22px]">monochrome.ctb</span><span class="w-[16px] bg-[#d2d2d2] flex items-center justify-center"><svg class="w-[12px] h-[12px]"><use href="#chev"/></svg></span></div></div>
              <div class="flex items-center h-[24px]"><svg class="w-[16px] h-[16px] ml-[15px] mr-[26px]" viewBox="0 0 24 24"><rect width="6" height="24" fill="#d8402c"/><rect x="9" width="6" height="24" fill="#1fa045"/><rect x="18" width="6" height="24" fill="#5f97de"/><path d="M18 6l6-5M18 12l6-5M18 18l6-5M18 24l6-5" stroke="#fff" stroke-width="1.300"/></svg><div class="flex w-[219px] h-[24px] border border-[#b4b4b4] bg-[#eeeeee]"><span class="flex-1 pl-[2px] leading-[22px] text-[#8a8a8a]">ByColor</span><span class="w-[16px] bg-[#c8c8c8] flex items-center justify-center"><svg class="w-[12px] h-[12px] opacity-50"><use href="#chev"/></svg></span></div></div>
              <div class="flex items-center h-[24px]"><svg class="w-[16px] h-[16px] ml-[15px] mr-[26px]" viewBox="0 0 16 16"><rect width="5" height="16" fill="#d8402c"/><rect x="5" width="3" height="16" fill="#1fa045"/><path d="M8 16V7l8-7v16z" fill="#111"/><path d="M8 9h8M8 12h8" stroke="#fff"/></svg><div class="w-[219px] h-[24px] border border-[#a5b5c8] bg-[#adcbeb] pl-[2px] leading-[22px]">None</div></div>
            </div>
          </div>

          <!-- View -->
          <div class="w-[277px] mt-[6px]">
            <div class="h-[20px] flex items-center justify-between pl-[6px] pr-[6px] bg-[#dfe4fb] border border-[#7f8a99] font-bold text-[16px] leading-[18px]"><span>View</span><svg class="w-[9px] h-[5px] mr-[1px]" viewBox="0 0 10 6"><path d="M0 6h10L5 0z" fill="#111"/></svg></div>
            <div class="bg-[#f5f5f5] border-l border-b border-[#dedede] pt-[18px] flex flex-col gap-[3px]">
              <div class="flex items-center h-[24px]"><svg class="w-[17px] h-[17px] ml-[15px] mr-[25px]" viewBox="0 0 17 17"><path d="M13 13A7 7 0 1 1 14 5" fill="none" stroke="#444" stroke-width="1.300"/><circle cx="8" cy="8" r="2" fill="#f2d020" stroke="#555" stroke-width=".5"/><path d="M12 12l4 4M16 12l-4 4" stroke="#333" stroke-width="1.100"/></svg><div class="w-[219px] h-[24px] border border-[#a5b5c8] bg-[#adcbeb] pl-[3px] leading-[22px]">6.0000</div></div>
              <div class="flex items-center h-[24px]"><svg class="w-[17px] h-[17px] ml-[15px] mr-[25px]" viewBox="0 0 17 17"><path d="M13 13A7 7 0 1 1 14 5" fill="none" stroke="#444" stroke-width="1.300"/><circle cx="8" cy="8" r="2" fill="#f2d020" stroke="#555" stroke-width=".5"/><path d="M12 12l2 2 2-2M14 14v2.500" fill="none" stroke="#333" stroke-width="1.100"/></svg><div class="w-[219px] h-[24px] border border-[#a5b5c8] bg-[#adcbeb] pl-[3px] leading-[22px]">4.5000</div></div>
              <div class="flex items-center h-[24px]"><svg class="w-[17px] h-[17px] ml-[15px] mr-[25px]" viewBox="0 0 17 17"><path d="M13 13A7 7 0 1 1 14 5" fill="none" stroke="#444" stroke-width="1.300"/><circle cx="8" cy="8" r="2" fill="#f2d020" stroke="#555" stroke-width=".5"/><path d="M12 12h4l-4 4h4" fill="none" stroke="#333" stroke-width="1.100"/></svg><div class="w-[219px] h-[24px] border border-[#a5b5c8] bg-[#adcbeb] pl-[3px] leading-[22px]">0.0000</div></div>
              <div class="flex items-center h-[24px]"><svg class="w-[14px] h-[17px] ml-[16px] mr-[27px]" viewBox="0 0 14 17"><path d="M1 1h12M1 16h12M7 3v11" stroke="#333"/><path d="M5 5l2-3 2 3zM5 12l2 3 2-3z" fill="#3b7fd0"/></svg><div class="w-[219px] h-[24px] border border-[#a5b5c8] bg-[#adcbeb] pl-[3px] leading-[22px]">11.0057</div></div>
              <div class="flex items-center h-[24px]"><svg class="w-[17px] h-[14px] ml-[15px] mr-[25px]" viewBox="0 0 17 14"><path d="M1 1v12M16 1v12" stroke="#333"/><path d="M3 7l3-2v4zM14 7l-3-2v4z" fill="#3b7fd0"/><path d="M6 7h1M10 7h1" stroke="#3b7fd0"/></svg><div class="w-[219px] h-[24px] border border-[#a5b5c8] bg-[#adcbeb] pl-[3px] leading-[22px]">12.2400</div></div>
            </div>
          </div>

          <!-- Misc -->
          <div class="w-[277px] mt-[7px]">
            <div class="h-[20px] flex items-center justify-between pl-[6px] pr-[6px] bg-[#dfe4fb] border border-[#7f8a99] font-bold text-[16px] leading-[18px]"><span>Misc</span><svg class="w-[9px] h-[5px] mr-[1px]" viewBox="0 0 10 6"><path d="M0 6h10L5 0z" fill="#111"/></svg></div>
            <div class="bg-[#f5f5f5] border-l border-b border-[#dedede] pt-[19px] flex flex-col gap-[3px]">
              <div class="flex items-center h-[24px]"><span class="w-[58px] pl-[15px] text-[#3f78c0] font-bold text-[20px] leading-[24px] font-['Liberation_Sans',sans-serif]">A</span><div class="flex w-[219px] h-[24px] border border-[#a2a2a2] bg-white"><span class="flex-1 pl-[3px] leading-[22px]">1:1</span><span class="w-[16px] bg-[#d2d2d2] flex items-center justify-center"><svg class="w-[12px] h-[12px]"><use href="#chev"/></svg></span></div></div>
              <div class="flex items-center h-[24px]"><svg class="w-[16px] h-[16px] ml-[15px] mr-[26px]" viewBox="0 0 16 16"><rect x=".5" y=".5" width="15" height="15" fill="#a9c4e0" stroke="#b3a860"/><path d="M8 3v7M8 10H4M8 10h5" stroke="#111" stroke-width="1.600"/></svg><div class="flex w-[219px] h-[24px] border border-[#a2a2a2] bg-white"><span class="flex-1 pl-[2px] leading-[22px]">Yes</span><span class="w-[16px] bg-[#d2d2d2] flex items-center justify-center"><svg class="w-[12px] h-[12px]"><use href="#chev"/></svg></span></div></div>
              <div class="flex items-center h-[24px]"><svg class="w-[17px] h-[17px] ml-[15px] mr-[25px]" viewBox="0 0 17 17"><path d="M6 1v8M6 9l-5 4M6 9h7M4 3l2-2 2 2M10 7l3 2-3 2" fill="none" stroke="#111" stroke-width="1.800"/><path d="M9 13h2v3H9zM14 13h2v3h-2z" fill="none" stroke="#777" stroke-width=".6"/></svg><div class="flex w-[219px] h-[24px] border border-[#a2a2a2] bg-white"><span class="flex-1 pl-[2px] leading-[22px]">Yes</span><span class="w-[16px] bg-[#d2d2d2] flex items-center justify-center"><svg class="w-[12px] h-[12px]"><use href="#chev"/></svg></span></div></div>
              <div class="flex items-center h-[24px]"><svg class="w-[17px] h-[17px] ml-[15px] mr-[25px]" viewBox="0 0 17 17"><path d="M7 1v10M7 11l-6 5M7 11h9M5 3l2-2 2 2M13 9l3 2-3 2" fill="none" stroke="#111" stroke-width="1.800"/></svg><div class="flex w-[219px] h-[24px] border border-[#a2a2a2] bg-white"><span class="flex-1 pl-[2px] leading-[22px]">Yes</span><span class="w-[16px] bg-[#d2d2d2] flex items-center justify-center"><svg class="w-[12px] h-[12px]"><use href="#chev"/></svg></span></div></div>
              <div class="flex items-center h-[24px]"><svg class="w-[16px] h-[16px] ml-[15px] mr-[26px]" viewBox="0 0 16 16"><rect x=".5" y="4.500" width="15" height="11" fill="#fff" stroke="#666"/><path d="M3 10h10M3 13h10" stroke="#888"/><use href="#hand" x="0" y="0" width="16" height="10"/></svg><div class="w-[219px] h-[24px] border border-[#a5b5c8] bg-[#adcbeb]"></div></div>
            </div>
          </div>
        </div>
      </div>

      <!-- palette strip -->
      <div class="w-[32px] shrink-0 h-[959px] bg-[#b9b9b9] border-l border-[#8a8a8a] flex flex-col items-center">
        <svg class="w-[11px] h-[11px] mt-[9px]" viewBox="0 0 12 12"><path d="M1 1l10 10M11 1L1 11" stroke="#111" stroke-width="2.200"/></svg>
        <svg class="w-[9px] h-[14px] mt-[20px]" viewBox="0 0 9 14"><path d="M1 0h7v1.500H7V6l2 2v1H5.300l-.8 5-.8-5H0V8l2-2V1.500H1z" fill="#222"/></svg>
        <span class="mt-auto [writing-mode:vertical-rl] leading-[22px] text-[16.500px] text-[#111] font-semibold">Properties</span>
        <svg class="w-[25px] h-[26px] mt-[12px]" viewBox="0 0 25 25"><rect x="1" y="1" width="6" height="6" fill="#3f6fe0" stroke="#1c3fa0"/><rect x="9" y="1" width="6" height="6" fill="#d81818"/><rect x="17" y="1" width="6" height="6" fill="#18a030"/><path d="M1 11h12" stroke="#2030a0" stroke-width="2" stroke-dasharray="1.500 1"/><path d="M1 15h13" stroke="#d02020" stroke-width="2"/><path d="M1 20h13" stroke="#20a040" stroke-width="2.400"/><path d="M18 14l-4 10h1.500l1-2.600h3l1 2.600H22zM17 20l1-3 1 3z" fill="#111"/></svg>
      </div>
    </aside>
  </main>

  <!-- command window -->
  <section class="shrink-0 border-t-2 border-[#888]">
    <div class="h-[33px] bg-[#bdbdbd] border-b-2 border-[#808080] flex items-center justify-between pl-[4px] pr-[10px] font-bold text-[16px] text-[#111]">
      <span>Command window</span>
      <svg class="w-[11px] h-[11px]" viewBox="0 0 12 12"><path d="M1 1l10 10M11 1L1 11" stroke="#111" stroke-width="2"/></svg>
    </div>
    <div class="h-[109px] bg-white border-x border-b border-[#888] pl-[5px] pt-[29px] font-['Liberation_Sans',sans-serif] text-[19.500px] leading-[24px] text-[#111]">: "Home" palette closed</div>
    <div class="h-[24px] bg-white pl-[5px] text-[17px] leading-[26px]">:</div>
  </section>

  <!-- status bar -->
  <footer class="flex-1 flex items-start text-[17px]">
    <span class="w-[1048px] shrink-0 pl-[3px] leading-[46px]">DraftSight 2018 x64</span>
    <div class="h-[38px] mt-[4px] flex items-center gap-[11px] px-[3px] border border-[#e4e4e4]">
      <span class="w-[35px] h-[34px] bg-[#e3e3e3] border border-[#adadad] flex items-center justify-center"><svg class="w-[24px] h-[26px]" viewBox="0 0 24 26"><path d="M1 6h22M1 13h22M6 1v20M13 1v20" stroke="#bbb"/><circle cx="6" cy="5" r="2.500" fill="#d63a5a"/><use href="#arrow" x="6" y="7" width="13" height="19"/></svg></span>
      <span class="w-[35px] h-[34px] bg-[#e3e3e3] border border-[#adadad] flex items-center justify-center"><svg class="w-[22px] h-[22px]" viewBox="0 0 22 22"><path d="M0 5h22M0 11h22M0 17h22M5 0v22M11 0v22M17 0v22" stroke="#111" stroke-width="1.400"/></svg></span>
      <span class="w-[35px] h-[34px] bg-[#e3e3e3] border border-[#adadad] flex items-center justify-center"><svg class="w-[21px] h-[16px]" viewBox="0 0 21 16"><path d="M3 3l11-2v14L3 12z" fill="none" stroke="#222" stroke-width="1.200"/><path d="M0 8h21" stroke="#222" stroke-dasharray="4 1"/></svg></span>
    </div>
    <div class="h-[38px] mt-[4px] ml-[4px] flex items-center gap-[11px] px-[3px] border border-[#e4e4e4]">
      <span class="w-[35px] h-[34px] bg-[#cde6f7] border border-[#1b5a8c] flex items-center justify-center"><svg class="w-[23px] h-[25px]" viewBox="0 0 23 25"><circle cx="9" cy="14" r="8" fill="none" stroke="#444" stroke-width="1.300"/><path d="M9 2v6M9 17v7M15 14h7M4 5l-2-3M14 8l4-6" stroke="#1f55c8" stroke-dasharray="2 1"/><circle cx="10" cy="14" r="2" fill="#1f55c8"/></svg></span>
      <span class="w-[35px] h-[34px] bg-[#cde6f7] border border-[#1b5a8c] flex items-center justify-center"><svg class="w-[24px] h-[26px]" viewBox="0 0 24 26"><path d="M1 3h8v2H3.500v3H8v2H3.500v3H9v2H1z" fill="#10108a"/><path d="M13 1v14" stroke="#111"/><use href="#arrow" x="11" y="4" width="11" height="16"/><path d="M0 22h18" stroke="#111" stroke-dasharray="3 1"/><circle cx="20" cy="22" r="2.300" fill="#d63a5a"/></svg></span>
      <span class="w-[35px] h-[34px] bg-[#cde6f7] border border-[#1b5a8c] flex items-center justify-center"><svg class="w-[26px] h-[26px]" viewBox="0 0 26 26"><path d="M1 3h8v2H3.500v3H8v2H3.500v3H9v2H1z" fill="#10108a"/><path d="M13 25L15 1M21 1l3 24M12 5h11M12 9h11M12 13h12M11 17h13M11 21h14" stroke="#444" stroke-width="1.500"/></svg></span>
    </div>
    <div class="h-[38px] mt-[4px] ml-[5px] flex items-center pl-[2px] pr-[2px] border border-[#e4e4e4]">
      <span class="w-[136px] h-[29px] bg-[#e1e1e1] border border-[#adadad] flex items-center justify-between pl-[6px] pr-[9px]">Annotation<svg class="w-[6px] h-[4px]" viewBox="0 0 6 4"><path d="M0 0h6L3 4z" fill="#111"/></svg></span>
      <span class="ml-[11px]">(1:1)</span>
    </div>
    <span class="ml-[7px] leading-[44px]">(0.1962,4.7088,0.0000)</span>
  </footer>
</div>
</body>
</html>
